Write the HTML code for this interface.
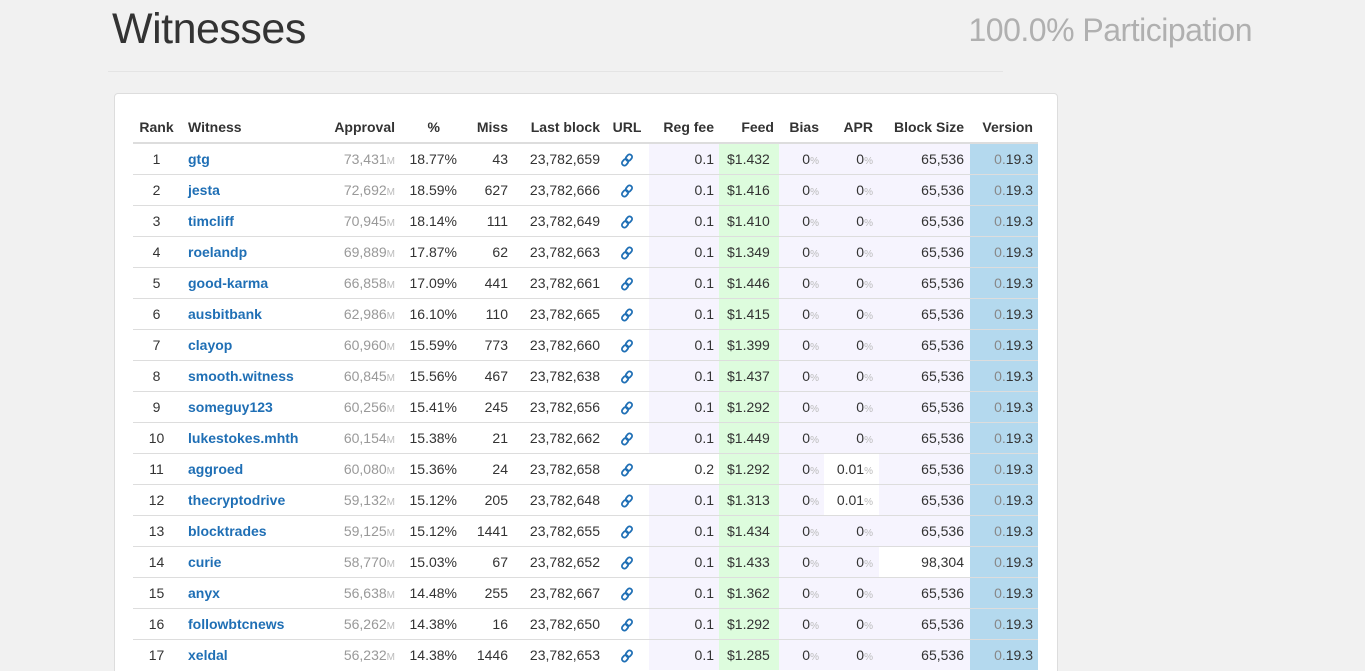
<!DOCTYPE html>
<html><head><meta charset="utf-8"><style>
html,body{margin:0;height:671px;overflow:hidden}
body{background:#f1f1f1;font-family:"Liberation Sans",Arial,sans-serif;color:#333;width:1365px;position:relative}
h1{position:absolute;left:112px;top:5px;margin:0;font-weight:normal;font-size:43px;color:#333;letter-spacing:-0.5px}
.part{position:absolute;right:113px;top:12px;font-size:32px;color:#b0b0b0;font-weight:300;letter-spacing:-0.5px}
.hr{position:absolute;left:108px;width:895px;top:71px;border-top:1px solid #e4e4e4}
.panel{position:absolute;left:114px;top:93px;width:942px;height:600px;background:#fff;border:1px solid #ddd;border-radius:4px}
table{position:absolute;left:133px;top:112px;border-collapse:collapse;table-layout:fixed;font-size:14px}
th{font-weight:bold;height:30px;padding:0;text-align:right;border-bottom:2px solid #ddd;vertical-align:middle}
td{height:30px;padding:0;text-align:right;border-top:1px solid #ddd;vertical-align:middle}
.c{text-align:center}.l{text-align:left}
a{color:#1f6fb5;font-weight:bold;text-decoration:none}
.g{color:#999}.m{color:#bbb;font-size:10px}
.lv{background:#f6f4fe}.gr{background:#ddfcdd}.bl{background:#b4d9ee}
</style></head><body>
<h1>Witnesses</h1><div class="part">100.0% Participation</div><div class="hr"></div>
<div class="panel"></div>
<table>
<colgroup><col style="width:47px"><col style="width:120px"><col style="width:99px"><col style="width:63px"><col style="width:51px"><col style="width:92px"><col style="width:44px"><col style="width:70px"><col style="width:60px"><col style="width:45px"><col style="width:55px"><col style="width:91px"><col style="width:68px"></colgroup>
<tr><th class="c">Rank</th><th class="l" style="padding-left:8px">Witness</th><th style="padding-right:4px">Approval</th><th style="padding-right:22px">%</th><th style="padding-right:5px">Miss</th><th style="padding-right:5px">Last block</th><th class="c">URL</th><th style="padding-right:5px">Reg fee</th><th style="padding-right:5px">Feed</th><th style="padding-right:5px">Bias</th><th style="padding-right:6px">APR</th><th style="padding-right:6px">Block Size</th><th style="padding-right:5px">Version</th></tr>
</table>
<script>
var d=[["gtg","73,431","18.77%",43,"659"],["jesta","72,692","18.59%",627,"666"],["timcliff","70,945","18.14%",111,"649"],["roelandp","69,889","17.87%",62,"663"],["good-karma","66,858","17.09%",441,"661"],["ausbitbank","62,986","16.10%",110,"665"],["clayop","60,960","15.59%",773,"660"],["smooth.witness","60,845","15.56%",467,"638"],["someguy123","60,256","15.41%",245,"656"],["lukestokes.mhth","60,154","15.38%",21,"662"],["aggroed","60,080","15.36%",24,"658"],["thecryptodrive","59,132","15.12%",205,"648"],["blocktrades","59,125","15.12%",1441,"655"],["curie","58,770","15.03%",67,"652"],["anyx","56,638","14.48%",255,"667"],["followbtcnews","56,262","14.38%",16,"650"],["xeldal","56,232","14.38%",1446,"653"]];
var f=["1.432","1.416","1.410","1.349","1.446","1.415","1.399","1.437","1.292","1.449","1.292","1.313","1.434","1.433","1.362","1.292","1.285"];
var ic='<svg width="14" height="16" viewBox="0 0 14 16" style="vertical-align:middle"><g fill="none" stroke="#1f6fb5" stroke-width="1.8" transform="rotate(40 7 8)"><rect x="4.5" y="1.5" width="5" height="7" rx="2.5"/><rect x="4.5" y="7.5" width="5" height="7" rx="2.5"/></g></svg>';
var h='';d.forEach(function(r,i){var n=i+1;
h+='<tr><td class="c">'+n+'</td><td class="l" style="padding-left:8px"><a>'+r[0]+'</a></td><td class="g" style="padding-right:4px">'+r[1]+'<span class="m">M</span></td><td style="padding-right:5px">'+r[2]+'</td><td style="padding-right:5px">'+r[3]+'</td><td style="padding-right:5px">23,782,'+r[4]+'</td><td class="c">'+ic+'</td><td class="'+(n==11?'':'lv')+'" style="padding-right:5px">'+(n==11?'0.2':'0.1')+'</td><td class="gr l" style="padding-left:8px">$'+f[i]+'</td><td class="lv" style="padding-right:5px">0<span class="m">%</span></td><td class="'+(n==11||n==12?'':'lv')+'" style="padding-right:6px">'+(n==11||n==12?'0.01':'0')+'<span class="m">%</span></td><td class="'+(n==14?'':'lv')+'" style="padding-right:6px">'+(n==14?'98,304':'65,536')+'</td><td class="bl" style="padding-right:5px"><span style="color:#888">0.</span>19.3</td></tr>';});
document.querySelector('table').insertAdjacentHTML('beforeend',h);
</script>
</body></html>
